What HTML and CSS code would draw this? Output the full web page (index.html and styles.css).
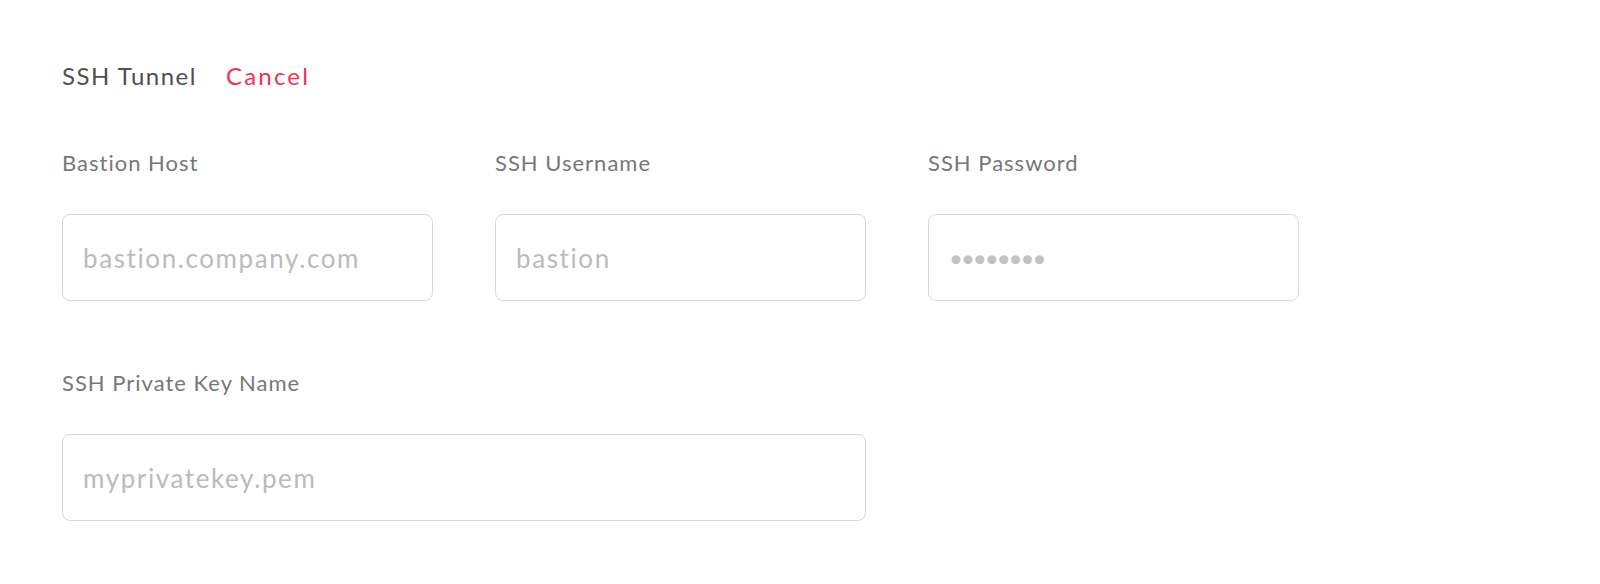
FILE: index.html
```html
<!DOCTYPE html>
<html>
<head>
<meta charset="utf-8">
<link rel="stylesheet" href="styles.css">
</head>
<body>
<div class="page">
  <div class="head">
    <span class="title">SSH Tunnel</span>
    <a class="cancel" href="#">Cancel</a>
  </div>
  <div class="grid">
    <div class="field">
      <label class="label">Bastion Host</label>
      <input class="input" type="text" placeholder="bastion.company.com">
    </div>
    <div class="field">
      <label class="label">SSH Username</label>
      <input class="input" type="text" placeholder="bastion">
    </div>
    <div class="field">
      <label class="label">SSH Password</label>
      <input class="input pw" type="password" value="password">
    </div>
    <div class="field wide">
      <label class="label">SSH Private Key Name</label>
      <input class="input" type="text" placeholder="myprivatekey.pem">
    </div>
  </div>
</div>
</body>
</html>
```

FILE: styles.css
```css
html, body {
  margin: 0;
  padding: 0;
  background: #fff;
}
body {
  font-family: Lato, "Noto Sans", sans-serif;
  font-variant-ligatures: none;
}
.page {
  padding: 60px 0 0 62px;
}
.head {
  display: flex;
  align-items: center;
  gap: 29px;
  height: 32px;
}
.title {
  font-size: 24px;
  letter-spacing: 1.5px;
  color: #505050;
  line-height: 32px;
}
.cancel {
  font-size: 24px;
  letter-spacing: 2.2px;
  color: #f2334d;
  text-decoration: none;
  line-height: 32px;
}
.grid {
  margin-top: 56px;
  display: grid;
  grid-template-columns: 371px 371px 371px;
  column-gap: 62px;
  row-gap: 67px;
}
.field {
  display: flex;
  flex-direction: column;
}
.wide {
  grid-column: 1 / span 2;
}
.label {
  font-size: 22px;
  letter-spacing: 1px;
  line-height: 30px;
  color: #777;
}
.input {
  margin-top: 36px;
  box-sizing: border-box;
  height: 87px;
  width: 100%;
  border: 1px solid #d9d9d9;
  border-radius: 8px;
  padding: 0 20px;
  font-family: Lato, "Noto Sans", sans-serif;
  font-variant-ligatures: none;
  font-size: 26px;
  letter-spacing: 1.6px;
  color: #bbb;
  outline: none;
  background: #fff;
}
.input::placeholder {
  color: #bbb;
}
.pw {
  font-size: 24px;
  letter-spacing: -2px;
  color: #c2c2c2;
}
```
